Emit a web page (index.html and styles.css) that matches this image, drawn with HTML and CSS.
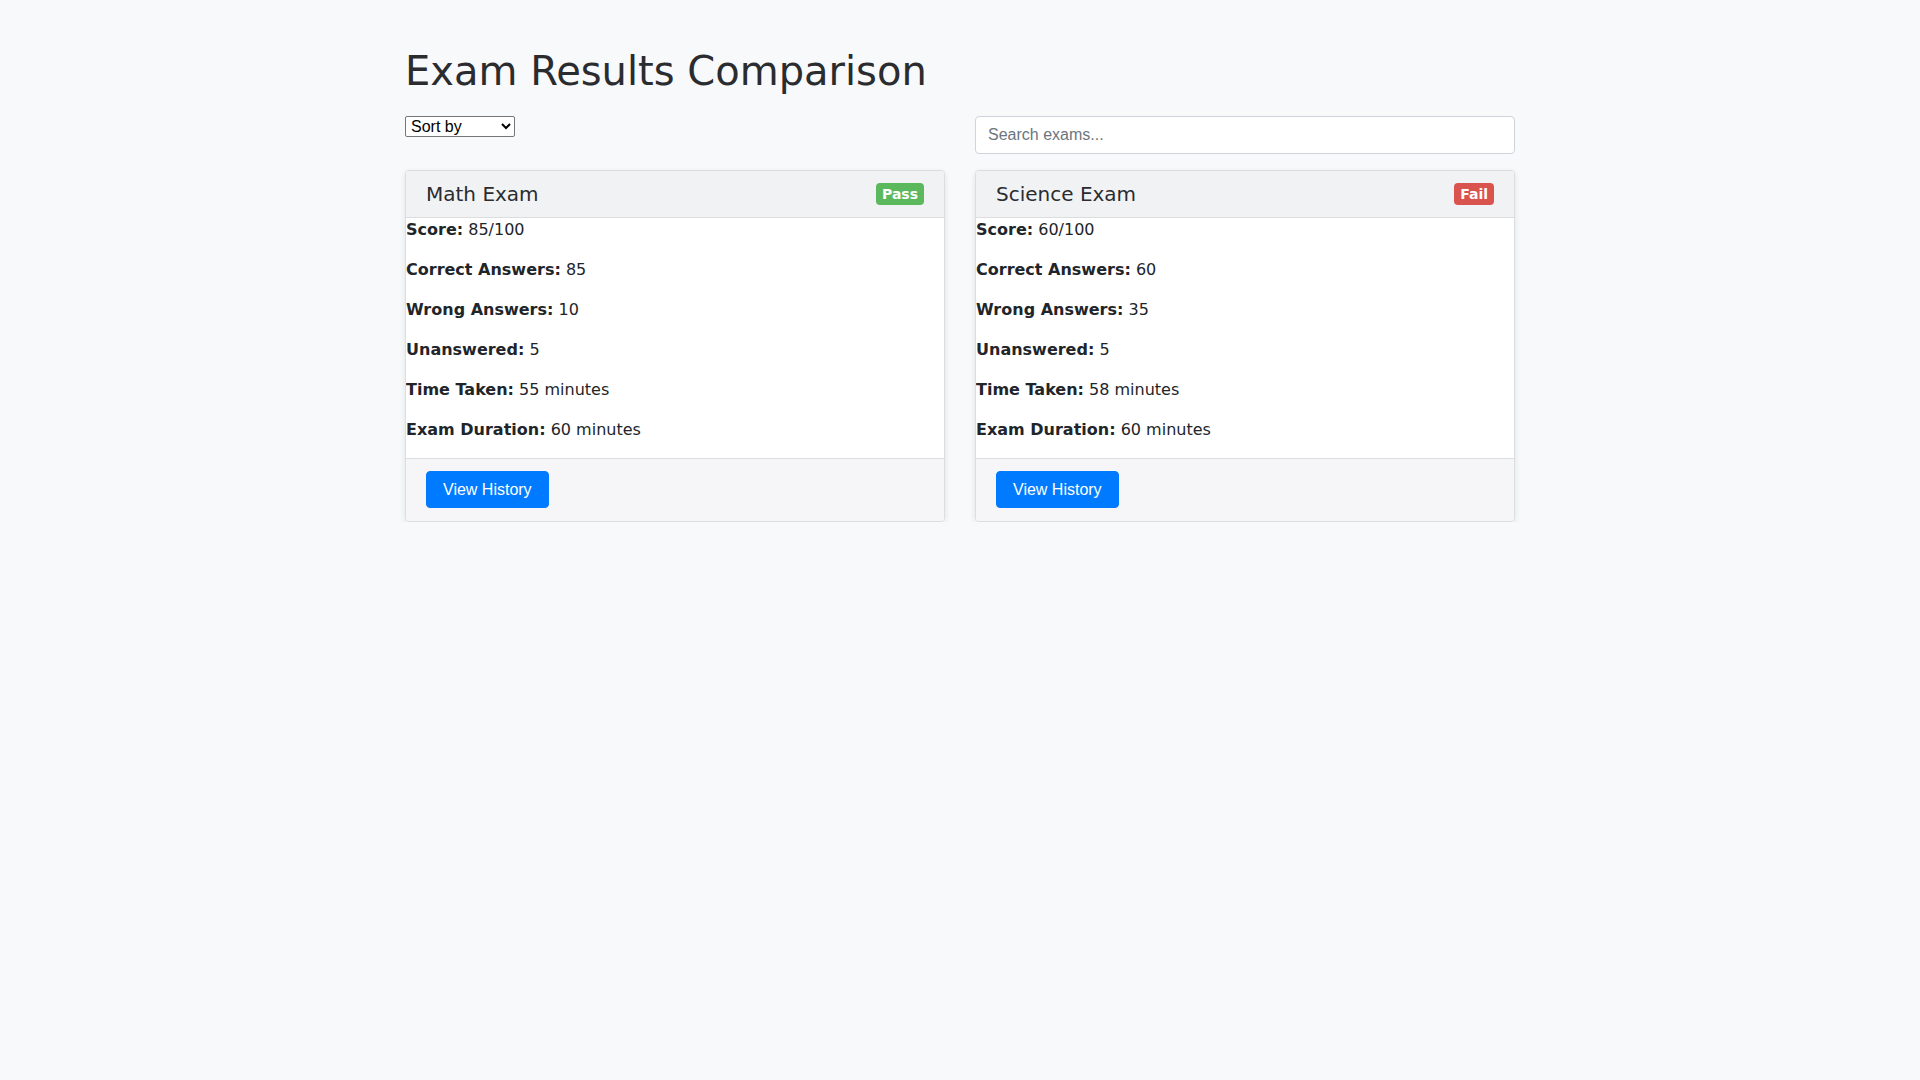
FILE: index.html
```html
<!DOCTYPE html>
<html lang="en">
<head>
<meta charset="utf-8">
<title>Exam Results Comparison</title>
<link rel="stylesheet" href="styles.css">
</head>
<body>
<div class="container">
  <h1 class="title">Exam Results Comparison</h1>
  <div class="row controls">
    <div class="col">
      <select class="sort">
        <option>Sort by</option>
        <option>Score</option>
        <option>Time Taken</option>
      </select>
    </div>
    <div class="col">
      <input class="search" type="text" placeholder="Search exams...">
    </div>
  </div>
  <div class="row">
    <div class="col">
      <div class="card">
        <div class="card-header">
          <h5 class="card-title">Math Exam</h5>
          <span class="badge badge-pass">Pass</span>
        </div>
        <div class="card-body">
          <p><strong>Score:</strong> 85/100</p>
          <p><strong>Correct Answers:</strong> 85</p>
          <p><strong>Wrong Answers:</strong> 10</p>
          <p><strong>Unanswered:</strong> 5</p>
          <p><strong>Time Taken:</strong> 55 minutes</p>
          <p><strong>Exam Duration:</strong> 60 minutes</p>
        </div>
        <div class="card-footer">
          <button class="btn">View History</button>
        </div>
      </div>
    </div>
    <div class="col">
      <div class="card">
        <div class="card-header">
          <h5 class="card-title">Science Exam</h5>
          <span class="badge badge-fail">Fail</span>
        </div>
        <div class="card-body">
          <p><strong>Score:</strong> 60/100</p>
          <p><strong>Correct Answers:</strong> 60</p>
          <p><strong>Wrong Answers:</strong> 35</p>
          <p><strong>Unanswered:</strong> 5</p>
          <p><strong>Time Taken:</strong> 58 minutes</p>
          <p><strong>Exam Duration:</strong> 60 minutes</p>
        </div>
        <div class="card-footer">
          <button class="btn">View History</button>
        </div>
      </div>
    </div>
  </div>
</div>
</body>
</html>
```
FILE: styles.css
```css
* { box-sizing: border-box; }

html, body {
  margin: 0;
  padding: 0;
}

body {
  background: #f8f9fa;
  color: #212529;
  font-family: "DejaVu Sans", sans-serif;
  font-size: 16px;
  line-height: 1.5;
}

.container {
  width: 1110px;
  margin: 0 auto;
  padding-top: 47px;
}

.title {
  margin: 0 0 21px;
  font-size: 40px;
  font-weight: 400;
  line-height: 48px;
  color: #2a2c2f;
}

.row {
  display: flex;
  gap: 30px;
}

.col {
  flex: 1 1 0;
  min-width: 0;
}

.controls {
  margin-bottom: 16px;
}

.sort {
  display: block;
  width: 110px;
  height: 21px;
  font-family: "Liberation Sans", Arial, sans-serif;
  font-size: 16px;
  line-height: 19px;
  color: #000;
  background: #fff;
  border: 1px solid #767676;
  border-radius: 2px;
  padding: 0 0 0 1px;
}

.search {
  display: block;
  width: 100%;
  height: 38px;
  padding: 6px 12px;
  font-family: "Liberation Sans", Arial, sans-serif;
  font-size: 16px;
  line-height: 24px;
  color: #495057;
  background: #fff;
  border: 1px solid #ced4da;
  border-radius: 4px;
  outline: none;
}

.search::placeholder {
  color: #6c757d;
}

.card {
  background: #fff;
  border: 1px solid #dcdddf;
  border-radius: 4px;
  box-shadow: 0 2px 6px rgba(0, 0, 0, 0.09);
  overflow: hidden;
}

.card-header {
  display: flex;
  justify-content: space-between;
  align-items: center;
  padding: 12px 20px;
  background: #f1f2f4;
  border-bottom: 1px solid #dcdddf;
}

.card-title {
  margin: 0;
  font-size: 20px;
  font-weight: 400;
  line-height: 22px;
  color: #2a2c2f;
}

.badge {
  display: inline-block;
  font-size: 14px;
  font-weight: 700;
  line-height: 14px;
  padding: 4px 6px;
  border-radius: 4px;
  color: #fff;
}

.badge-pass { background: #5cb85c; }
.badge-fail { background: #d9534f; }

.card-body {
  padding: 0;
}

.card-body p {
  margin: 0 0 16px;
  line-height: 24px;
}

.card-body strong {
  font-weight: 700;
}

.card-footer {
  padding: 12px 20px 13px;
  background: #f6f6f8;
  border-top: 1px solid #dcdddf;
}

.btn {
  display: inline-block;
  padding: 7px 16px;
  font-family: "Liberation Sans", Arial, sans-serif;
  font-size: 16px;
  line-height: 21px;
  color: #fff;
  background: #007bff;
  border: 1px solid #007bff;
  border-radius: 4px;
  cursor: pointer;
}
```
